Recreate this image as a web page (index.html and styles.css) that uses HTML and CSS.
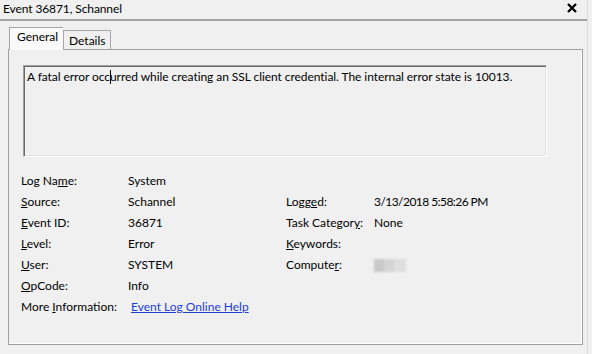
FILE: index.html
```html
<!DOCTYPE html>
<html>
<head>
<meta charset="utf-8">
<link rel="stylesheet" href="styles.css">
</head>
<body>
<div class="window">
  <div class="titlebar">
    <span class="title">Event 36871, Schannel</span>
    <svg class="close" width="10" height="10" viewBox="0 0 10 10"><path d="M1 1 L9 9 M9 1 L1 9" stroke="#000" stroke-width="2.3" fill="none"/></svg>
  </div>
  <div class="tabs">
    <div class="tab selected">General</div>
    <div class="tab">Details</div>
  </div>
  <div class="panel">
    <div class="textbox">A fatal error occ<span class="caret"></span>urred while creating an SSL client credential. The internal error state is 10013.</div>
    <div class="props">
      <div class="lbl">Log Na<u>m</u>e:</div><div class="val">System</div><div></div><div></div>
      <div class="lbl"><u>S</u>ource:</div><div class="val">Schannel</div><div class="lbl">Logg<u>e</u>d:</div><div class="val tight">3/13/2018 5:58:26 PM</div>
      <div class="lbl"><u>E</u>vent ID:</div><div class="val">36871</div><div class="lbl">Task Categor<u>y</u>:</div><div class="val">None</div>
      <div class="lbl"><u>L</u>evel:</div><div class="val">Error</div><div class="lbl"><u>K</u>eywords:</div><div class="val"></div>
      <div class="lbl"><u>U</u>ser:</div><div class="val">SYSTEM</div><div class="lbl">Compute<u>r</u>:</div><div class="val"><span class="blur"></span></div>
      <div class="lbl"><u>O</u>pCode:</div><div class="val">Info</div><div></div><div></div>
      <div class="lbl">More <u>I</u>nformation:</div><div class="val span3"><a href="#" class="link">Event Log Online Help</a></div>
    </div>
  </div>
</div>
</body>
</html>
```
FILE: styles.css
```css
html, body {
  margin: 0;
  padding: 0;
  background: #f0f0f0;
}
body {
  font-family: "Lato", "Open Sans", sans-serif;
  font-size: 12px;
  color: #000;
}
.window {
  width: 588px;
  height: 354px;
  border-right: 1px solid #dadada;
  box-sizing: border-box;
}
.titlebar {
  height: 19px;
  display: flex;
  align-items: center;
  justify-content: space-between;
  padding: 0 10px 0 3px;
  border-bottom: 2px solid #a3a3a3;
  box-sizing: content-box;
}
.title {
  line-height: 16px;
  margin-top: -2px;
  letter-spacing: -0.1px;
}
.close {
  display: block;
  margin-top: -3px;
}
.tabs {
  display: flex;
  align-items: flex-end;
  margin-left: 9px;
  padding-top: 6px;
  position: relative;
  z-index: 1;
}
.tab {
  border: 1px solid #a6a6a6;
  border-bottom: none;
  box-sizing: border-box;
  height: 19px;
  padding: 0 4px 0 5px;
  line-height: 19px;
  background: #f0f0f0;
}
.tab.selected {
  height: 23px;
  margin-bottom: -1px;
  padding: 0 7px 0 7px;
  line-height: 18px;
  background: #f9f9f9;
  border-right: none;
  width: 54px;
}
.panel {
  margin-left: 8px;
  width: 575px;
  height: 296px;
  border: 1px solid #a0a0a0;
  box-shadow: inset -1px -1px 0 #fff;
  box-sizing: border-box;
  padding: 15px 0 0 14px;
}
.textbox {
  width: 524px;
  height: 92px;
  box-sizing: border-box;
  border-top: 1px solid #a0a0a0;
  border-left: 1px solid #a0a0a0;
  border-right: 1px solid #fff;
  border-bottom: 1px solid #fff;
  box-shadow: inset 1px 1px 0 #696969, inset -1px -1px 0 #e3e3e3;
  padding: 3px 3px;
  line-height: 16px;
  letter-spacing: -0.06px;
}
.caret {
  display: inline-block;
  width: 0;
  height: 14px;
  border-left: 1px solid #000;
  vertical-align: -3px;
  margin-right: -1px;
}
.props {
  display: grid;
  grid-template-columns: 107px 158px 88px 1fr;
  grid-auto-rows: 21px;
  margin: 13px 0 0 -2px;
  line-height: 21px;
}
.span3 {
  grid-column: span 3;
}
.props u {
  text-underline-offset: 1px;
}
.tight {
  letter-spacing: -0.55px;
}
.blur {
  display: inline-block;
  width: 32px;
  height: 13px;
  vertical-align: -3px;
  background:
    linear-gradient(90deg, #c9c9c9 0 10px, #d4d4d4 10px 20px, #dedede 20px 32px);
  filter: blur(1px);
}
.link {
  color: #1c3fd6;
  text-decoration: underline;
  margin-left: 3px;
}
```
